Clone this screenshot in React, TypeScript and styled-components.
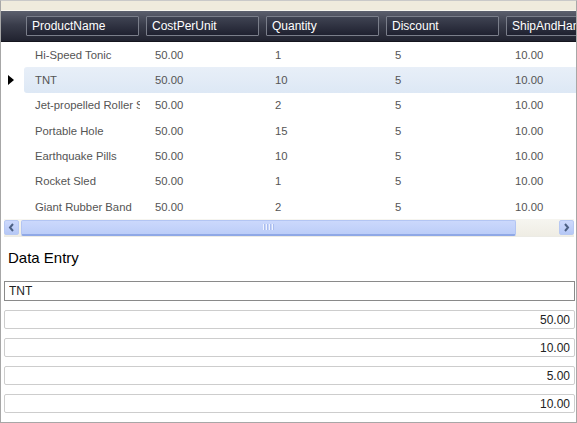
import React from 'react'
import styled, { createGlobalStyle } from 'styled-components'

type Product = {
  name: string
  cost: string
  qty: string
  discount: string
  ship: string
}

const products: Product[] = [
  { name: 'Hi-Speed Tonic', cost: '50.00', qty: '1', discount: '5', ship: '10.00' },
  { name: 'TNT', cost: '50.00', qty: '10', discount: '5', ship: '10.00' },
  { name: 'Jet-propelled Roller Skates', cost: '50.00', qty: '2', discount: '5', ship: '10.00' },
  { name: 'Portable Hole', cost: '50.00', qty: '15', discount: '5', ship: '10.00' },
  { name: 'Earthquake Pills', cost: '50.00', qty: '10', discount: '5', ship: '10.00' },
  { name: 'Rocket Sled', cost: '50.00', qty: '1', discount: '5', ship: '10.00' },
  { name: 'Giant Rubber Band', cost: '50.00', qty: '2', discount: '5', ship: '10.00' },
]

const columns = ['ProductName', 'CostPerUnit', 'Quantity', 'Discount', 'ShipAndHandling']

const selectedIndex = 1

const App: React.FC = () => {
  const selected = products[selectedIndex]

  return (
    <>
      <GlobalStyle />
      <Frame>
        <TopStrip />
        <Grid>
          <HeaderBar>
            <RowHeaderSpacer />
            {columns.map((c) => (
              <HeaderCell key={c}>
                <HeaderBox>{c}</HeaderBox>
              </HeaderCell>
            ))}
          </HeaderBar>
          <Rows>
            {products.map((p, i) => (
              <Row key={p.name}>
                <RowHeader>{i === selectedIndex && <Indicator />}</RowHeader>
                <RowBody $selected={i === selectedIndex}>
                  <Cell>{p.name}</Cell>
                  <Cell>{p.cost}</Cell>
                  <Cell>{p.qty}</Cell>
                  <Cell>{p.discount}</Cell>
                  <Cell>{p.ship}</Cell>
                </RowBody>
              </Row>
            ))}
          </Rows>
          <ScrollBar>
            <ScrollButton>
              <svg width="7" height="9" viewBox="0 0 7 9">
                <path d="M5 1 L2 4.5 L5 8" fill="none" stroke="#4d6185" strokeWidth="2" />
              </svg>
            </ScrollButton>
            <Track>
              <Thumb>
                <Grip>
                  <span />
                  <span />
                  <span />
                  <span />
                </Grip>
              </Thumb>
            </Track>
            <ScrollButton>
              <svg width="7" height="9" viewBox="0 0 7 9">
                <path d="M2 1 L5 4.5 L2 8" fill="none" stroke="#4d6185" strokeWidth="2" />
              </svg>
            </ScrollButton>
          </ScrollBar>
        </Grid>
        <Entry>
          <Title>Data Entry</Title>
          <Fields>
            <Field $primary defaultValue={selected.name} />
            <Field $numeric defaultValue={selected.cost} />
            <Field $numeric defaultValue={'10.00'} />
            <Field $numeric defaultValue={'5.00'} />
            <Field $numeric defaultValue={selected.ship} />
          </Fields>
        </Entry>
      </Frame>
    </>
  )
}

export default App

const GlobalStyle = createGlobalStyle`
  body {
    margin: 0;
    background: #ffffff;
    font-family: "Liberation Sans", Arial, sans-serif;
  }
`

const Frame = styled.div`
  box-sizing: border-box;
  width: 577px;
  height: 423px;
  border: 1px solid #a7a7a7;
  border-top-color: #c9c9c9;
  display: flex;
  flex-direction: column;
  overflow: hidden;
`

const TopStrip = styled.div`
  height: 9px;
  background: #efebdd;
  border-bottom: 1px solid #f7f5ee;
`

const Grid = styled.div`
  display: flex;
  flex-direction: column;
  overflow: hidden;
`

const HeaderBar = styled.div`
  display: flex;
  height: 30px;
  align-items: center;
  background: linear-gradient(#5c606e 0%, #3a3d4b 45%, #20222f 100%);
  border-bottom: 1px solid #15161e;
`

const RowHeaderSpacer = styled.div`
  flex: 0 0 25px;
`

const HeaderCell = styled.div`
  flex: 0 0 120px;
  box-sizing: border-box;
  padding-right: 7px;
`

const HeaderBox = styled.div`
  box-sizing: border-box;
  height: 20px;
  line-height: 18px;
  padding-left: 5px;
  border: 1px solid #7a7e8a;
  border-radius: 1px;
  background: linear-gradient(#3f4352, #1f2130);
  color: #ffffff;
  font-size: 12px;
  white-space: nowrap;
  overflow: hidden;
`

const Rows = styled.div`
  display: flex;
  flex-direction: column;
`

const Row = styled.div`
  display: flex;
  height: 25.33px;
  align-items: stretch;
`

const RowHeader = styled.div`
  flex: 0 0 23px;
  display: flex;
  align-items: center;
  justify-content: center;
`

const Indicator = styled.div`
  width: 0;
  height: 0;
  border-top: 5px solid transparent;
  border-bottom: 5px solid transparent;
  border-left: 6px solid #000000;
  margin-left: -3px;
`

const RowBody = styled.div<{ $selected?: boolean }>`
  display: flex;
  align-items: center;
  flex: 1 0 auto;
  padding-left: 2px;
  background: ${(p) => (p.$selected ? 'linear-gradient(#e8eff8, #dde8f5)' : 'transparent')};
  border-radius: 3px 0 0 3px;
`

const Cell = styled.div`
  flex: 0 0 120px;
  box-sizing: border-box;
  padding-left: 9px;
  padding-right: 9px;
  color: #555555;
  font-size: 11.3px;
  white-space: nowrap;
  overflow: hidden;
  &:first-child {
    padding-right: 0;
    flex-basis: 114px;
    margin-right: 6px;
  }
`

const ScrollBar = styled.div`
  display: flex;
  align-items: center;
  gap: 2px;
  height: 17px;
  margin: 0 2px 0 3px;
  background: linear-gradient(#f6f5f0, #efede4);
  border-bottom: 1px solid #ecebe5;
`

const ScrollButton = styled.div`
  box-sizing: border-box;
  width: 15px;
  height: 15px;
  display: flex;
  align-items: center;
  justify-content: center;
  background: linear-gradient(#cdd9fc, #b6c8f6);
  border: 1px solid #b8c9f2;
  border-radius: 2px;
`

const Track = styled.div`
  flex: 1;
  height: 17px;
  display: flex;
  align-items: center;
`

const Thumb = styled.div`
  box-sizing: border-box;
  width: 495px;
  height: 16px;
  display: flex;
  align-items: center;
  justify-content: center;
  background: linear-gradient(#cbd8fc, #bccdf8);
  border: 1px solid #b3c5f3;
  border-bottom: 2px solid #8fa8e6;
  border-radius: 2px;
`

const Grip = styled.div`
  display: flex;
  gap: 1px;
  span {
    width: 1px;
    height: 6px;
    background: #eef2fd;
    border-right: 1px solid #a9bcee;
  }
`

const Entry = styled.div`
  display: flex;
  flex-direction: column;
  padding: 0 0 0 3px;
`

const Title = styled.div`
  height: 44px;
  line-height: 42px;
  padding-left: 4px;
  font-size: 15px;
  color: #000000;
`

const Fields = styled.div`
  display: flex;
  flex-direction: column;
  gap: 9px;
`

const Field = styled.input<{ $primary?: boolean; $numeric?: boolean }>`
  box-sizing: border-box;
  width: 571px;
  height: ${(p) => (p.$primary ? '20px' : '19px')};
  margin: 0;
  padding: 0 4px;
  border: 1px solid ${(p) => (p.$primary ? '#8a8a8a' : '#cdcdcd')};
  border-radius: ${(p) => (p.$primary ? '0' : '2px')};
  font-family: "Liberation Sans", Arial, sans-serif;
  font-size: 12px;
  color: #222222;
  text-align: ${(p) => (p.$numeric ? 'right' : 'left')};
  outline: none;
  background: #ffffff;
`
